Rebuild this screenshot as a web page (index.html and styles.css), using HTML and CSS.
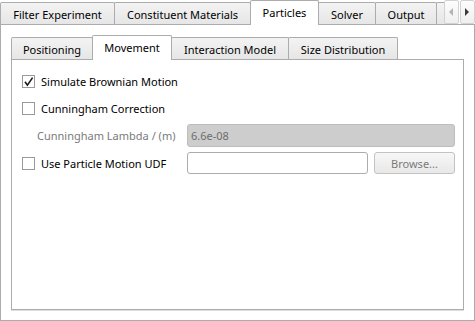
FILE: index.html
```html
<!DOCTYPE html>
<html lang="en">

<head>
  <meta charset="UTF-8">
  <meta name="viewport" content="width=device-width, initial-scale=1.0">
  <title>Particles</title>
  <link rel="stylesheet" href="styles.css">
</head>

<body>
  <div class="tabs outer">
    <div class="tabbar">
      <div class="tab w-filter">Filter Experiment</div>
      <div class="tab w-materials">Constituent Materials</div>
      <div class="tab w-particles selected">Particles</div>
      <div class="tab w-solver">Solver</div>
      <div class="tab w-output">Output</div>
      <div class="tab w-more"></div>

      <!-- scroll buttons sit over the last tab -->
      <div class="scroller">
        <span class="scroll-btn">
          <svg width="5" height="8" viewBox="0 0 5 8"><path d="M4 0 L0 4 L4 8 Z" fill="#b4b4b4"/></svg>
        </span>
        <span class="scroll-btn">
          <svg width="5" height="8" viewBox="0 0 5 8"><path d="M0 0 L4 4 L0 8 Z" fill="#3c3c3c"/></svg>
        </span>
      </div>
    </div>

    <div class="pane">
      <div class="tabs inner">
        <div class="tabbar">
          <div class="tab w-positioning">Positioning</div>
          <div class="tab w-movement selected">Movement</div>
          <div class="tab w-interaction">Interaction Model</div>
          <div class="tab w-size">Size Distribution</div>
        </div>

        <div class="pane form">
          <label class="check wide">
            <span class="box">
              <svg width="11" height="11" viewBox="0 0 11 11"><path d="M2 5.8 L4.4 9.2 L9.6 1.6" fill="none" stroke="#1a1a1a" stroke-width="1.6"/></svg>
            </span>
            Simulate Brownian Motion
          </label>

          <label class="check wide">
            <span class="box"></span>
            Cunningham Correction
          </label>

          <div class="field-label disabled">Cunningham Lambda / (m)</div>
          <div class="input disabled span2">6.6e-08</div>

          <label class="check">
            <span class="box"></span>
            Use Particle Motion UDF
          </label>
          <div class="input"></div>
          <div class="button disabled">Browse...</div>
        </div>
      </div>
    </div>
  </div>
</body>

</html>
```

FILE: styles.css
```css
* {
  box-sizing: border-box;
}

body {
  margin: 0;
  width: 475px;
  height: 321px;
  background-color: #ffffff;
  color: #000000;
  font-family: 'Noto Sans', 'Liberation Sans', sans-serif;
  font-size: 11px;
  overflow: hidden;
}

/* TABS */
.tabs {
  display: flex;
  flex-direction: column;
}

.outer {
  height: 321px;
}

.inner {
  flex: 1;
}

.tabbar {
  display: flex;
  align-items: flex-end;
  height: 24px;
  position: relative;
  flex-shrink: 0;
}

.tab {
  height: 22px;
  margin-right: -1px;
  border: 1px solid #acacac;
  border-bottom: none;
  border-radius: 2px 2px 0 0;
  background: linear-gradient(#f3f3f3, #e6e6e6);
  text-align: center;
  line-height: 20px;
  padding-top: 2px;
  white-space: nowrap;
  overflow: hidden;
}

.tab.selected {
  height: 25px;
  margin-bottom: -1px;
  background: #ffffff;
  position: relative;
  z-index: 1;
  line-height: 22px;
  padding-top: 1px;
}

.w-filter { width: 115px; }
.w-materials { width: 137px; }
.w-particles { width: 69px; }
.w-solver { width: 58px; }
.w-output { width: 62px; }
.w-more { width: 20px; }

.w-positioning { width: 82px; }
.w-movement { width: 80px; }
.w-interaction { width: 118px; }
.w-size { width: 110px; }

.scroller {
  position: absolute;
  right: 0;
  top: 0;
  display: flex;
  gap: 1px;
  z-index: 2;
}

.scroll-btn {
  width: 15px;
  height: 24px;
  border: 1px solid #d2d2d2;
  border-radius: 2px;
  background: linear-gradient(#fdfdfd, #efefef);
  display: flex;
  align-items: center;
  justify-content: center;
}

.pane {
  flex: 1;
  display: flex;
  flex-direction: column;
  border: 1px solid #acacac;
  background-color: #ffffff;
  padding: 10px;
}

.inner .pane {
  box-shadow: 0 1px 0 #dedede;
}

/* FORM */
.form {
  display: grid;
  grid-template-columns: 159px 1fr 81px;
  grid-template-rows: 22px 22px 23px 22px;
  grid-auto-rows: 22px;
  align-content: start;
  column-gap: 6px;
  row-gap: 5px;
  padding: 10px 8px 0 10px;
}

.check {
  display: flex;
  align-items: center;
  gap: 6px;
  white-space: nowrap;
}

.check.wide {
  grid-column: 1 / 4;
}

.box {
  width: 13px;
  height: 13px;
  border: 1px solid #9a9a9a;
  background-color: #ffffff;
  display: flex;
  align-items: center;
  justify-content: center;
}

.field-label {
  display: flex;
  align-items: center;
  padding-left: 15px;
  white-space: nowrap;
}

.disabled {
  color: #7a7a7a;
}

.input {
  border: 1px solid #acacac;
  border-radius: 3px;
  background-color: #ffffff;
  padding: 0 3px;
  display: flex;
  align-items: center;
}

.input.disabled {
  background-color: #cdcdcd;
  border-color: #bdbdbd;
  color: #6d6d6d;
}

.span2 {
  grid-column: 2 / 4;
}

.button {
  border: 1px solid #c3c3c3;
  border-radius: 3px;
  background: linear-gradient(#f7f7f7, #e8e8e8);
  display: flex;
  align-items: center;
  justify-content: center;
}
```
